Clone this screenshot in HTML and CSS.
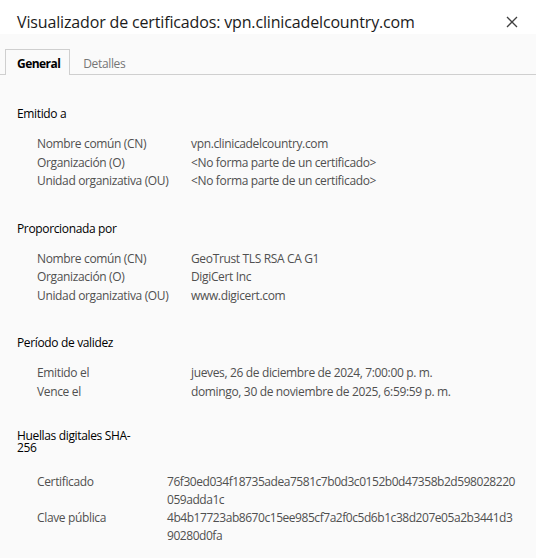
FILE: index.html
```html
<!DOCTYPE html>
<html lang="es">
<head>
    <meta charset="UTF-8">
    <title>Visualizador de certificados</title>
    <link rel="stylesheet" href="styles.css">
</head>
<body>
    <div class="titlebar">
        <h1 class="title">Visualizador de certificados: vpn.clinicadelcountry.com</h1>
        <svg class="close" width="12" height="12" viewBox="0 0 12 12">
            <path d="M1 1 L11 11 M11 1 L1 11" stroke="#404040" stroke-width="1.3" fill="none"/>
        </svg>
    </div>

    <div class="tabs">
        <div class="tab active">General</div>
        <div class="tab">Detalles</div>
    </div>

    <div class="content">
        <div class="section">
            <div class="heading">Emitido a</div>
            <div class="rows">
                <div class="label">Nombre común (CN)</div>
                <div class="value">vpn.clinicadelcountry.com</div>
                <div class="label">Organización (O)</div>
                <div class="value">&lt;No forma parte de un certificado&gt;</div>
                <div class="label">Unidad organizativa (OU)</div>
                <div class="value">&lt;No forma parte de un certificado&gt;</div>
            </div>
        </div>

        <div class="section">
            <div class="heading">Proporcionada por</div>
            <div class="rows">
                <div class="label">Nombre común (CN)</div>
                <div class="value">GeoTrust TLS RSA CA G1</div>
                <div class="label">Organización (O)</div>
                <div class="value">DigiCert Inc</div>
                <div class="label">Unidad organizativa (OU)</div>
                <div class="value">www.digicert.com</div>
            </div>
        </div>

        <div class="section">
            <div class="heading">Período de validez</div>
            <div class="rows">
                <div class="label">Emitido el</div>
                <div class="value">jueves, 26 de diciembre de 2024, 7:00:00 p. m.</div>
                <div class="label">Vence el</div>
                <div class="value">domingo, 30 de noviembre de 2025, 6:59:59 p. m.</div>
            </div>
        </div>

        <div class="section">
            <div class="heading narrow">Huellas digitales SHA-256</div>
            <div class="rows hashes">
                <div class="label">Certificado</div>
                <div class="value hash">76f30ed034f18735adea7581c7b0d3c0152b0d47358b2d598028220<br>059adda1c</div>
                <div class="label">Clave pública</div>
                <div class="value hash">4b4b17723ab8670c15ee985cf7a2f0c5d6b1c38d207e05a2b3441d3<br>90280d0fa</div>
            </div>
        </div>
    </div>
</body>
</html>
```

FILE: styles.css
```css
body {
    margin: 0;
    background-color: #fafafa;
    font-family: "Open Sans", "Noto Sans", sans-serif;
    font-size: 12px;
    letter-spacing: -0.35px;
    color: #000000;
    width: 536px;
    height: 558px;
    overflow: hidden;
}
.titlebar {
    display: flex;
    align-items: center;
    justify-content: space-between;
    height: 34px;
    padding: 0 17px;
    background-color: #ffffff;
}
.title {
    margin: 0;
    padding-top: 9px;
    font-size: 16px;
    font-weight: normal;
    letter-spacing: -0.15px;
    color: #1b1b1b;
}
.close {
    margin-top: 9px;
    margin-right: 1px;
}
.tabs {
    display: flex;
    margin-top: 15px;
    padding-left: 5px;
    border-bottom: 1px solid #cfcfcf;
    height: 25px;
}
.tab {
    padding: 0 10px 0 12px;
    line-height: 27px;
    color: #767676;
    border: 1px solid transparent;
    border-bottom: none;
}
.tab.active {
    padding: 0 9px 0 11px;
    font-weight: bold;
    letter-spacing: -0.55px;
    color: #000000;
    border-color: #cfcfcf;
    background-color: #fafafa;
    margin-bottom: -1px;
    height: 25px;
}
.content {
    padding: 30px 17px 0;
}
.section {
    margin-bottom: 29px;
}
.heading {
    line-height: 18px;
    margin-bottom: 12px;
}
.heading.narrow {
    width: 118px;
    line-height: 12px;
    margin-bottom: 19px;
}
.rows {
    display: grid;
    grid-template-columns: 154px 1fr;
    padding-left: 20px;
    line-height: 18.5px;
    color: #505050;
}
.rows.hashes {
    grid-template-columns: 130px 1fr;
    line-height: 18px;
}
.hash {
    letter-spacing: -0.45px;
}
```
